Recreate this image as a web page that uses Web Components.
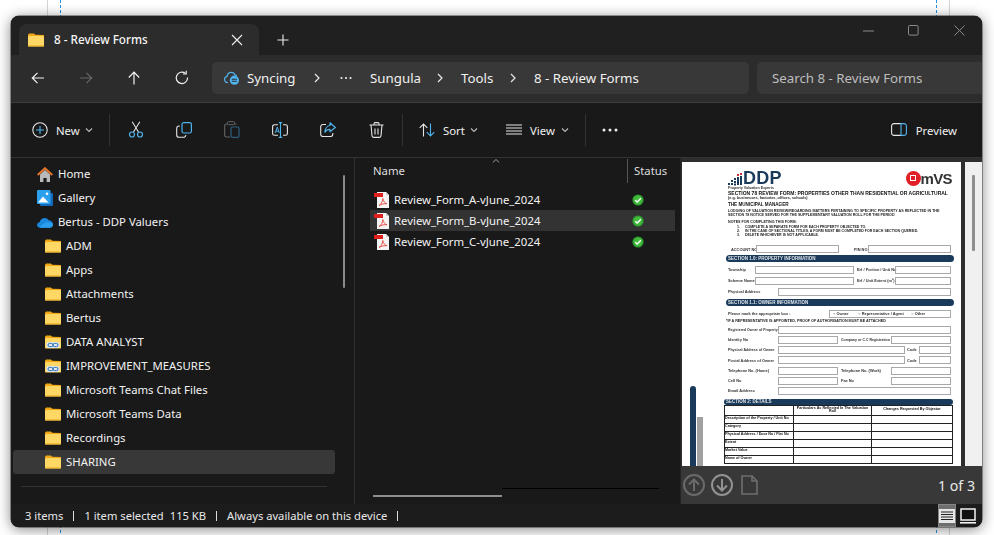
<!DOCTYPE html>
<html lang="en"><head><meta charset="utf-8"><title>8 - Review Forms</title>
<style>html,body{margin:0;padding:0;background:#fff;font-family:"Noto Sans","Open Sans",sans-serif;font-size:11.35px;color:#f0f0f0;overflow:hidden}</style>
</head><body>
<ex-desktop>
<ex-window>
  <ex-titlebar slot="title"></ex-titlebar>
  <ex-navbar slot="nav"></ex-navbar>
  <ex-toolbar slot="tools"></ex-toolbar>
  <ex-sidebar slot="side">
    <nav-item icon="home" level="0">Home</nav-item>
    <nav-item icon="gallery" level="0">Gallery</nav-item>
    <nav-item icon="onedrive" level="0">Bertus - DDP Valuers</nav-item>
    <nav-item icon="folder">ADM</nav-item>
    <nav-item icon="folder">Apps</nav-item>
    <nav-item icon="folder">Attachments</nav-item>
    <nav-item icon="folder">Bertus</nav-item>
    <nav-item icon="folderlink">DATA ANALYST</nav-item>
    <nav-item icon="folderlink">IMPROVEMENT_MEASURES</nav-item>
    <nav-item icon="folder">Microsoft Teams Chat Files</nav-item>
    <nav-item icon="folder">Microsoft Teams Data</nav-item>
    <nav-item icon="folder">Recordings</nav-item>
    <nav-item icon="folder" selected>SHARING</nav-item>
  </ex-sidebar>
  <file-list slot="files">
    <file-row>Review_Form_A-vJune_2024</file-row>
    <file-row selected>Review_Form_B-vJune_2024</file-row>
    <file-row>Review_Form_C-vJune_2024</file-row>
  </file-list>
  <preview-pane slot="preview"><doc-page></doc-page></preview-pane>
  <status-bar slot="status"></status-bar>
</ex-window>
</ex-desktop>
<script>
const W='#f2f2f2',B='#4fb3ec';
const FOLDER=`<path d="M0 2.2C0 1 .8.4 1.8.4h3.6c.8 0 1.2.7 1.9 1.3L16 2v2H0z" fill="#f0a818"/><rect x="0" y="3" width="16" height="10.6" rx="1.2" fill="#ffd765"/><rect x="0" y="12.6" width="16" height="1" rx=".5" fill="#e8a820"/>`;
const ICONS={
 folder:[16,14,FOLDER],
 folderlink:[16,14,`<path d="M0 2.2C0 1 .8.4 1.8.4h3.6c.8 0 1.2.7 1.9 1.3L16 2v2H0z" fill="#f0a818"/><rect x="0" y="3" width="16" height="10.6" rx="1.2" fill="#ffd765"/><rect x="1.2" y="7" width="13.6" height="6" rx="3" fill="#dbe7f2"/><rect x="3" y="8.4" width="5" height="3.2" rx="1.6" fill="none" stroke="#2a6fb0" stroke-width="1"/><rect x="8" y="8.4" width="5" height="3.2" rx="1.6" fill="none" stroke="#2a6fb0" stroke-width="1"/>`],
 home:[16,15,`<path d="M3 7.5 8 3l5 4.5V15H9.6v-4H6.4v4H3z" fill="#b9b9b9"/><path d="M.7 8 8 1.2 15.3 8" fill="none" stroke="#e8772a" stroke-width="1.9"/>`],
 gallery:[16,16,`<rect x="3" y="3" width="13" height="13" rx="1" fill="#1668b8"/><rect x="0" y="0" width="13.5" height="14" rx="1" fill="#2aa0ee"/><path d="M1 12.5 6 6.5l5.5 6z" fill="#fff"/><circle cx="10" cy="3.8" r="1.3" fill="#fff"/>`],
 onedrive:[16,11,`<path d="M3.2 10.8C1.4 10.8 0 9.6 0 8c0-1.5 1.2-2.6 2.6-2.8C3.2 2.8 5.2 1 7.6 1c1.7 0 3.2.9 4 2.3 2.2 0 4.4 1.6 4.4 4.3 0 1.8-1.4 3.2-3.2 3.2z" fill="#1a86dc"/><path d="M2.6 10.8h10.2c1.8 0 3.2-1.4 3.2-3.2 0-.5-.1-1-.3-1.4L10 5 4.5 8z" fill="#2a9ff0"/>`],
 back:[16,16,`<path d="M14 8H2.5M7.5 2.8 2.3 8l5.2 5.2" fill="none" stroke="${W}" stroke-width="1.2"/>`],
 forward:[16,16,`<path d="M2 8h11.5M8.5 2.8 13.7 8l-5.2 5.2" fill="none" stroke="#666" stroke-width="1.2"/>`],
 up:[16,16,`<path d="M8 14.5V2.5M2.8 7.5 8 2.2l5.2 5.3" fill="none" stroke="${W}" stroke-width="1.2"/>`],
 refresh:[16,16,`<path d="M13.6 7.6a5.7 5.7 0 1 1-2.1-4.2" fill="none" stroke="${W}" stroke-width="1.2"/><path d="M12.2.8v3.2H9" fill="none" stroke="${W}" stroke-width="1.2"/>`],
 chev:[8,10,`<path d="M2 1l4 4-4 4" fill="none" stroke="#e8e8e8" stroke-width="1.2"/>`],
 dots3:[12,4,`<circle cx="1.5" cy="2" r="1.1" fill="#eee"/><circle cx="6" cy="2" r="1.1" fill="#eee"/><circle cx="10.5" cy="2" r="1.1" fill="#eee"/>`],
 sync:[15,14,`<path d="M4 11.5C2 11.5.6 10.2.6 8.4c0-1.5 1-2.7 2.4-3C3.4 3 5 1.3 7.2 1.3c1.8 0 3.3 1 3.9 2.7.7 0 1.3.2 1.8.5" fill="none" stroke="${B}" stroke-width="1.2"/><circle cx="10.4" cy="9.2" r="4.6" fill="${B}"/><path d="M7.8 8.3h5M7.8 10.2h5" stroke="#2c2c2c" stroke-width="1.1"/>`],
 close:[12,12,`<path d="M1 1l10 10M11 1 1 11" stroke="#eee" stroke-width="1.1"/>`],
 plus:[12,12,`<path d="M6 .5v11M.5 6h11" stroke="#eee" stroke-width="1.1"/>`],
 wmin:[11,2,`<path d="M0 1h11" stroke="#8a8a8a" stroke-width="1"/>`],
 wmax:[11,11,`<rect x=".5" y=".5" width="9.6" height="9.6" rx="1.2" fill="none" stroke="#8a8a8a"/>`],
 wclose:[11,11,`<path d="M.5.5l10 10M10.5.5l-10 10" stroke="#8a8a8a" stroke-width="1"/>`],
 new:[16,16,`<circle cx="8" cy="8" r="7.2" fill="none" stroke="#e6e6e6" stroke-width="1.1"/><path d="M8 4v8M4 8h8" stroke="${B}" stroke-width="1.1"/>`],
 down:[8,6,`<path d="M1 1.5l3 3 3-3" fill="none" stroke="#bbb" stroke-width="1.1"/>`],
 cut:[16,17,`<path d="M5.5 11 11.8.8M10.5 11 4.2.8" stroke="#e6e6e6" stroke-width="1.1" fill="none"/><circle cx="4" cy="13.5" r="2.5" fill="none" stroke="${B}" stroke-width="1.2"/><circle cx="12" cy="13.5" r="2.5" fill="none" stroke="${B}" stroke-width="1.2"/>`],
 copy:[16,16,`<rect x="6" y=".6" width="9.4" height="10.4" rx="1.8" fill="none" stroke="${B}" stroke-width="1.2"/><path d="M3.8 4H3a2.3 2.3 0 0 0-2.3 2.3V13A2.3 2.3 0 0 0 3 15.3h4.5A2.3 2.3 0 0 0 9.8 13" fill="none" stroke="#e6e6e6" stroke-width="1.1"/>`],
 paste:[16,17,`<path d="M3.5 3H2.5A1.8 1.8 0 0 0 .7 4.8v9.4A1.8 1.8 0 0 0 2.5 16H6" fill="none" stroke="#666" stroke-width="1.1"/><path d="M11 3h1.5" stroke="#666" stroke-width="1.1"/><rect x="3.5" y=".7" width="7" height="3" rx=".8" fill="none" stroke="#666" stroke-width="1"/><rect x="7" y="6" width="8" height="10.4" rx="1.5" fill="none" stroke="#2e5f80" stroke-width="1.2"/>`],
 rename:[16,16,`<path d="M6 2.7H2.5A1.9 1.9 0 0 0 .6 4.6v6.8a1.9 1.9 0 0 0 1.9 1.9H6M11 2.7h2.5a1.9 1.9 0 0 1 1.9 1.9v6.8a1.9 1.9 0 0 1-1.9 1.9H11" fill="none" stroke="#e6e6e6" stroke-width="1.1"/><path d="M8.5.6v14.8M6.800.6h3.400M6.800 15.400h3.400" stroke="${B}" stroke-width="1.1"/><path d="M3.200 11 5.300 5l2 6M3.900 9.200h2.900" stroke="${B}" stroke-width="1" fill="none"/>`],
 share:[16,15,`<path d="M6 2.5H3A2.3 2.3 0 0 0 .7 4.8v7.4A2.3 2.3 0 0 0 3 14.500h7.500a2.300 2.300 0 0 0 2.300-2.300V11" fill="none" stroke="#e6e6e6" stroke-width="1.1"/><path d="M10 .8 15.300 5.500 10 9.800V7.400c-2.400 0-4 .9-5 2.800C5 7 6.800 3.900 10 3.500z" fill="none" stroke="${B}" stroke-width="1.2" stroke-linejoin="round"/>`],
 trash:[15,16,`<path d="M.5 3h14M5 3V1.800A1.200 1.200 0 0 1 6.200.6h2.600A1.200 1.200 0 0 1 10 1.800V3M2 3l1 10.800a1.700 1.700 0 0 0 1.700 1.600h5.600a1.700 1.700 0 0 0 1.700-1.600L13 3M6 6.500v6M9 6.500v6" fill="none" stroke="#e6e6e6" stroke-width="1.1"/>`],
 sort:[16,14,`<path d="M4.500 13.500V1M.7 4.800 4.500 1l3.800 3.800" fill="none" stroke="#e6e6e6" stroke-width="1.1"/><path d="M11.500.5V13M7.700 9.200l3.800 3.800 3.800-3.800" fill="none" stroke="${B}" stroke-width="1.1"/>`],
 view:[16,11,`<path d="M0 1h16M0 4h16M0 7h16M0 10h16" stroke="#e6e6e6" stroke-width="1"/>`],
 more:[16,4,`<circle cx="2" cy="2" r="1.5" fill="#eee"/><circle cx="8" cy="2" r="1.5" fill="#eee"/><circle cx="14" cy="2" r="1.5" fill="#eee"/>`],
 preview:[16,13,`<path d="M10 .6H3A2.400 2.400 0 0 0 .6 3v7A2.400 2.400 0 0 0 3 12.400h7" fill="none" stroke="#e6e6e6" stroke-width="1.1"/><path d="M10 .6h3a2.400 2.400 0 0 1 2.400 2.400v7a2.400 2.400 0 0 1-2.400 2.400h-3zM10 .6v11.800" fill="none" stroke="${B}" stroke-width="1.1"/>`],
 pdf:[16,18,`<path d="M3 1h9l3 3v13H3z" fill="#f4f4f4"/><path d="M12 1v3h3" fill="#ccc"/><rect x="0" y="2" width="9" height="4" fill="#e0201c"/><path d="M5 14.500c2-1 3.500-3.500 3.800-7 .6 3 2 4.600 4.200 5.200-3-.2-5.500.3-8 1.800z" fill="none" stroke="#e8443c" stroke-width=".9"/>`],
 ok:[12,12,`<circle cx="6" cy="6" r="5.6" fill="#2f9e2f"/><circle cx="6" cy="6" r="4.2" fill="#44bb3c"/><path d="M3.200 6.200 5.200 8l3.700-3.700" fill="none" stroke="#fff" stroke-width="1.3"/>`],
 cup:[8,6,`<path d="M.8 4.500 4 1.500l3.200 3" fill="none" stroke="#999" stroke-width="1"/>`],
 pgup:[22,22,`<circle cx="11" cy="11" r="10" fill="none" stroke="#6a6a6a" stroke-width="2"/><path d="M11 17V6M6 10.500l5-5 5 5" fill="none" stroke="#6a6a6a" stroke-width="2"/>`],
 pgdn:[22,22,`<circle cx="11" cy="11" r="10" fill="none" stroke="#929292" stroke-width="2"/><path d="M11 5v11M6 11.500l5 5 5-5" fill="none" stroke="#929292" stroke-width="2"/>`],
 pgdoc:[17,20,`<path d="M1 1h10l5 5v13H1zM11 1v5h5" fill="none" stroke="#6e6e6e" stroke-width="1.6"/>`],
 vdetails:[16,14,`<rect x=".5" y=".5" width="15" height="13" fill="#e6e6e6" stroke="#e6e6e6"/><path d="M2 3h12M2 5.500h12M2 8h12M2 10.500h12" stroke="#222" stroke-width="1"/>`],
 vlarge:[16,16,`<rect x="1" y="1" width="14" height="11" fill="#111" stroke="#f2f2f2" stroke-width="1.5"/><path d="M0 14.800h16" stroke="#f2f2f2" stroke-width="1.6"/>`],
};
function def(name,css,html,init){
  customElements.define(name,class extends HTMLElement{
    constructor(){super();const r=this.attachShadow({mode:'open'});r.innerHTML=`<style>${css}</style>${typeof html==='function'?html(this):html}`;}
    connectedCallback(){if(init)init(this);}
  });
}
customElements.define('ex-icon',class extends HTMLElement{
  connectedCallback(){
    if(this.shadowRoot)return;
    const i=ICONS[this.getAttribute('name')];
    const r=this.attachShadow({mode:'open'});
    r.innerHTML=`<style>:host{display:inline-flex;flex:none;line-height:0}svg{display:block}</style><svg width="${i[0]}" height="${i[1]}" viewBox="0 0 ${i[0]} ${i[1]}">${i[2]}</svg>`;
  }
});
def('ex-desktop',`:host{display:block;box-sizing:border-box;width:994px;height:535px;padding:16px 12px 8px 11px;overflow:hidden;
 background:
  linear-gradient(#d5d5d5,#d5d5d5) 47px 0/1px 100% no-repeat,
  linear-gradient(#d5d5d5,#d5d5d5) 949px 0/1px 100% no-repeat,
  repeating-linear-gradient(#1e90e6 0 3px,transparent 3px 5px) 60px 0/1px 100% no-repeat,
  repeating-linear-gradient(#1e90e6 0 3px,transparent 3px 5px) 936px 0/1px 100% no-repeat,#fff}`,`<slot></slot>`);
def('ex-window',`:host{display:flex;flex-direction:column;width:971px;height:511px;border-radius:8px;overflow:hidden;background:#1a1a1a;box-shadow:0 2px 14px rgba(0,0,0,.5),0 0 0 .5px #555}
 .main{display:flex;flex:1;min-height:0;background:#191919}
 .divider{flex:none;width:1px;background:#2e2e2e;margin-left:0}`,
 `<slot name="title"></slot><slot name="nav"></slot><slot name="tools"></slot>
  <div class="main"><slot name="side"></slot><div class="divider"></div><slot name="files"></slot><slot name="preview"></slot></div>
  <slot name="status"></slot>`);
def('ex-titlebar',`:host{display:flex;align-items:flex-end;height:39px;box-sizing:border-box;padding:8px 0 0 8px;background:#202020;flex:none}
 .tab{display:flex;align-items:center;width:240px;height:31px;box-sizing:border-box;padding:0 16px 0 9px;background:#2c2c2c;border-radius:8px 8px 0 0;font-size:11.7px;color:#f5f5f5}
 .tab span{margin:-2px 0 0 10px;flex:1;white-space:nowrap;font-weight:500}
 .plus{margin:0 0 0 18px;align-self:center;display:flex}
 .ctl{margin-left:auto;align-self:flex-start;display:flex;margin-top:1px;height:11px;align-items:center}
 .ctl ex-icon:nth-child(1){margin-right:34px}.ctl ex-icon:nth-child(2){margin-right:35px}.ctl ex-icon:nth-child(3){margin-right:17px}`,
 `<div class="tab"><ex-icon name="folder"></ex-icon><span>8 - Review Forms</span><ex-icon name="close"></ex-icon></div>
  <div class="plus"><ex-icon name="plus"></ex-icon></div>
  <div class="ctl"><ex-icon name="wmin"></ex-icon><ex-icon name="wmax"></ex-icon><ex-icon name="wclose"></ex-icon></div>`);
def('ex-navbar',`:host{display:flex;align-items:center;height:48px;box-sizing:border-box;flex:none;padding:0 0 1px 3px;background:#2c2c2c;border-bottom:1px solid #3c3c3c;font-size:13.3px}
 .b{width:48px;display:flex;justify-content:center;flex:none}
 .addr{margin-left:6px;width:537px;height:32px;box-sizing:border-box;background:#383838;border-radius:5px;display:flex;align-items:center;padding-left:12px;flex:none;white-space:nowrap;color:#f0f0f0}
 .addr>*{flex:none}
 .s{margin-left:8px;flex:1;height:32px;box-sizing:border-box;background:#383838;border-radius:5px 0 0 5px;display:flex;align-items:center;padding-left:15px;color:#bdbdbd;white-space:nowrap}`,
 `<div class="b"><ex-icon name="back"></ex-icon></div><div class="b"><ex-icon name="forward"></ex-icon></div><div class="b"><ex-icon name="up"></ex-icon></div><div class="b"><ex-icon name="refresh"></ex-icon></div>
  <div class="addr"><ex-icon name="sync" style="margin-right:8px"></ex-icon><span style="width:48px">Syncing</span><ex-icon name="chev" style="margin-left:18px"></ex-icon><ex-icon name="dots3" style="margin-left:19px"></ex-icon><span style="margin-left:18px;width:50px">Sungula</span><ex-icon name="chev" style="margin-left:16px"></ex-icon><span style="margin-left:17px;width:32px">Tools</span><ex-icon name="chev" style="margin-left:16px"></ex-icon><span style="margin-left:17px">8 - Review Forms</span></div>
  <div class="s">Search 8 - Review Forms</div>`);
def('ex-toolbar',`:host{display:flex;align-items:center;height:55px;box-sizing:border-box;flex:none;background:#191919;border-bottom:1px solid #333;padding:0 0 1px 21px;color:#f0f0f0}
 .sep{width:1px;height:32px;background:#333;flex:none}
 .i{width:48px;display:flex;justify-content:center;flex:none}
 .t{display:flex;align-items:center;flex:none}
 .t span{margin:2px 5px 0 8px}`,
 `<div class="t" style="width:77px"><ex-icon name="new"></ex-icon><span>New</span><ex-icon name="down"></ex-icon></div><div class="sep"></div>
  <div style="width:2px"></div>
  <div class="i"><ex-icon name="cut"></ex-icon></div><div class="i"><ex-icon name="copy"></ex-icon></div><div class="i"><ex-icon name="paste"></ex-icon></div><div class="i"><ex-icon name="rename"></ex-icon></div><div class="i"><ex-icon name="share"></ex-icon></div><div class="i"><ex-icon name="trash"></ex-icon></div>
  <div style="width:2px"></div><div class="sep"></div>
  <div class="t" style="margin-left:16px;width:87px"><ex-icon name="sort"></ex-icon><span>Sort</span><ex-icon name="down"></ex-icon></div>
  <div class="t" style="width:79px"><ex-icon name="view"></ex-icon><span style="margin-right:6px">View</span><ex-icon name="down"></ex-icon></div>
  <div class="sep"></div>
  <ex-icon name="more" style="margin-left:16px"></ex-icon>
  <div class="t" style="margin-left:auto;margin-right:25px"><ex-icon name="preview"></ex-icon><span style="margin:2px 0 0 9px">Preview</span></div>`);
def('ex-sidebar',`:host{display:block;position:relative;flex:none;width:343px;box-sizing:border-box;padding:4px 0 0 2px}
 .hr{height:1px;background:#333;margin:12px 7px 0 8px;width:306px}
 .thumb{position:absolute;left:332px;top:17px;width:2px;height:113px;background:#8a8a8a;border-radius:1px}`,
 `<slot></slot><div class="hr"></div><div class="thumb"></div>`);
def('nav-item',`:host{display:flex;align-items:center;width:322px;height:24px;box-sizing:border-box;padding-left:32px;white-space:nowrap;color:#f2f2f2;border-radius:3px}
 :host([level="0"]){padding-left:24px}
 :host([selected]){background:#383838}
 .ic{width:16px;display:flex;justify-content:center;margin-right:5px;flex:none}
 .tx{margin-top:-2px}`,
 t=>`<div class="ic"><ex-icon name="${t.getAttribute('icon')}"></ex-icon></div><div class="tx"><slot></slot></div>`);
def('file-list',`:host{display:block;position:relative;flex:none;width:325px;box-sizing:border-box;padding:0 0 0 15px}
 .hd{display:flex;height:25px;align-items:center;box-sizing:border-box;padding:0 0 0 3px;position:relative;color:#ddd}
 .nm{width:254px}.d{width:1px;height:24px;background:#555;margin-right:6px;flex:none}
 .cup{position:absolute;left:122px;top:0;line-height:0}
 .rows{margin-top:6px}
 .sb{position:absolute;left:18px;top:337px;width:129px;height:2px;background:#8e8e8e}
 .bl{position:absolute;left:147px;top:330px;width:157px;height:1px;background:#000}`,
 `<div class="hd"><div class="nm">Name</div><div class="d"></div><div>Status</div><div class="cup"><ex-icon name="cup"></ex-icon></div></div>
  <div class="rows"><slot></slot></div><div class="sb"></div><div class="bl"></div>`);
def('file-row',`:host{display:flex;align-items:center;width:305px;height:21px;box-sizing:border-box;padding-left:4px;white-space:nowrap;color:#f2f2f2}
 :host([selected]){background:#333}
 .n{width:238px;margin-left:4px;flex:none}`,
 `<ex-icon name="pdf"></ex-icon><div class="n"><slot></slot></div><ex-icon name="ok"></ex-icon>`);
def('preview-pane',`:host{display:flex;flex-direction:column;flex:1;min-width:0;background:#2e2e2e;border-left:1px solid #242424}
 .top{flex:1;min-height:0;display:flex;padding:4px 0 0 1px;overflow:hidden}
 .bar{flex:none;height:38px;display:flex;align-items:center;background:#383838;padding:0 7px 0 2px;color:#e8e8e8;font-size:14.2px}
 .rail{margin-left:4px;width:17px;background:#f0f0f0;flex:none;position:relative}
 .rail i{position:absolute;left:7px;top:13px;width:3px;height:76px;background:#8f8f8f;border-radius:1px}`,
 `<div class="top"><slot></slot><div class="rail"><i></i></div></div>
  <div class="bar"><ex-icon name="pgup"></ex-icon><ex-icon name="pgdn" style="margin-left:6px"></ex-icon><ex-icon name="pgdoc" style="margin-left:8px"></ex-icon><span style="margin-left:auto">1 of 3</span></div>`);
const box=w=>`<div class="bx" style="width:${w}px"></div>`;
def('doc-page',`:host{display:block;flex:none;width:279px;background:#fff;overflow:hidden;position:relative;box-sizing:border-box;color:#222;font-family:"Liberation Sans",sans-serif;font-size:4px}
 .c{position:absolute;left:44px;top:8px;width:228px;filter:blur(.4px)}
 .hdr{height:21px;display:flex;justify-content:space-between;padding:0 2px 0 2px}
 .ddp{position:relative;width:60px}
 .ddp b{font-size:18px;line-height:16px;color:#1a3a5c;margin-left:15px;display:block;letter-spacing:.2px}
 .ddp small{font-size:3.6px;font-weight:bold;display:block;line-height:4px;color:#333;white-space:nowrap}
 .ddp svg{position:absolute;left:0;top:3px}
 .mvs{display:flex;align-items:center;height:17px;position:relative}
 .mvs i{display:block;width:15px;height:15px;border-radius:50%;background:#e01f26;margin-right:-1px;position:relative}
 .mvs i::after{content:"";position:absolute;left:4px;top:4px;width:6px;height:6px;border:1px solid #fff;box-sizing:border-box}
 .mvs b{font-size:15px;line-height:14px;color:#333;letter-spacing:-.6px}
 .t{font-size:5px;line-height:5px;font-weight:bold;color:#111;padding-left:2px;white-space:nowrap}
 .s{font-size:3.8px;line-height:4px;font-weight:bold;padding-left:2px;white-space:nowrap}
 .p{font-size:3.65px;line-height:4px;padding-left:2px;white-space:nowrap;font-weight:bold;color:#222}
 .li{padding-left:11px;font-size:3.55px;line-height:4px;white-space:nowrap;font-weight:bold;color:#222}
 .li u{display:inline-block;width:8px;text-decoration:none}
 .bar{height:7px;border-radius:4px;background:#1a3a5c;color:#e0e4e8;font-weight:bold;font-size:4.5px;line-height:7px;padding-left:2px;white-space:nowrap}
 .r{display:flex;align-items:center;height:9px;white-space:nowrap;font-size:3.9px;font-weight:bold;color:#333}
 .r>span{flex:none}
 .bx{height:8px;border:.75px solid #a8a8a8;box-sizing:border-box;flex:none}
 table{border-collapse:collapse;width:229px;table-layout:fixed;margin-left:-2px;font-size:3.7px;font-weight:bold;margin-top:.5px;color:#111}
 td{border:.75px solid #222;height:8px;padding:0;line-height:3.7px;white-space:nowrap;overflow:hidden;box-sizing:border-box}
 .h td{height:9.5px;text-align:center;white-space:normal}
 .n1{position:absolute;left:8px;top:224px;width:6px;height:90px;background:#1a3a5c;border-radius:3px 3px 0 0}
 .n2{position:absolute;left:15px;top:255px;width:6px;height:60px;background:#a0a0a0}`,
 `<div class="n1"></div><div class="n2"></div><div class="c">
 <div class="hdr"><div class="ddp"><svg width="15" height="13" viewBox="0 0 15 13"><g fill="#1a3a5c"><rect x="0" y="10" width="2" height="2"/><rect x="3" y="7" width="2" height="2"/><rect x="3" y="10" width="2" height="2"/><rect x="6" y="5" width="2" height="2"/><rect x="6" y="8" width="2" height="2"/><rect x="6" y="10.5" width="2" height="2"/></g><g fill="#d23030"><rect x="9" y="1" width="2" height="2"/><rect x="12" y="0" width="2" height="2"/></g><g fill="#1a3a5c"><rect x="9" y="4" width="2" height="8"/><rect x="12" y="3" width="2" height="9"/></g></svg><b>DDP</b><small>Property Valuation Experts</small></div>
 <div class="mvs"><i></i><b>mVS</b></div></div>
 <div class="t">SECTION 78 REVIEW FORM: PROPERTIES OTHER THAN RESIDENTIAL OR AGRICULTURAL</div>
 <div class="s">(e.g. businesses, factories, offices, schools)</div>
 <div class="t" style="margin-top:2px;font-size:4.6px">THE MUNICIPAL MANAGER</div>
 <div class="p" style="margin-top:2px">LODGING OF VALUATION REVIEW/REGARDING MATTERS PERTAINING TO SPECIFIC PROPERTY AS REFLECTED IN THE</div>
 <div class="p">SECTION 78 NOTICE SERVED FOR THE SUPPLEMENTARY VALUATION ROLL FOR THE PERIOD</div>
 <div class="p" style="margin-top:3px">NOTES FOR COMPLETING THIS FORM:</div>
 <div class="li" style="margin-top:1px"><u>1.</u>COMPLETE A SEPARATE FORM FOR EACH PROPERTY OBJECTED TO.</div>
 <div class="li"><u>2.</u>IN THE CASE OF SECTIONAL TITLES, A FORM MUST BE COMPLETED FOR EACH SECTION QUERIED.</div>
 <div class="li"><u>3.</u>DELETE WHICHEVER IS NOT APPLICABLE.</div>
 <div class="r" style="margin-top:7.5px;padding-left:5px"><span style="width:25px">ACCOUNT NO</span>${box(83)}<span style="margin-left:15px;width:14px">PIN NO</span>${box(83)}</div>
 <div class="bar" style="margin-top:1.5px">SECTION 1.0: PROPERTY INFORMATION</div>
 <div class="r" style="margin-top:3px;padding-left:2px"><span style="width:27px">Township</span>${box(99)}<span style="margin-left:3px;width:38px">Erf / Portion / Unit No</span>${box(56)}</div>
 <div class="r" style="margin-top:2px;padding-left:2px"><span style="width:27px">Scheme Name</span>${box(99)}<span style="margin-left:3px;width:38px">Erf / Unit Extent (m²)</span>${box(56)}</div>
 <div class="r" style="margin-top:2px;padding-left:2px"><span style="width:50px">Physical Address</span>${box(173)}</div>
 <div class="bar" style="margin-top:3px">SECTION 1.1: OWNER INFORMATION</div>
 <div class="r" style="margin-top:3px;padding-left:2px"><span style="width:101px">Please mark the appropriate box :</span><div class="bx" style="width:122px;padding-left:3px;line-height:6.5px">○ Owner &nbsp; &nbsp; &nbsp; &nbsp; ○ Representative / Agent &nbsp; &nbsp; &nbsp; ○ Other</div></div>
 <div class="p" style="line-height:5px;margin-top:1px;font-size:3.7px;padding-left:0">*IF A REPRESENTATIVE IS APPOINTED, PROOF OF AUTHORISATION MUST BE ATTACHED</div>
 <div class="r" style="margin-top:1px;padding-left:2px"><span style="width:50px;font-size:3.5px">Registered Owner of Property</span>${box(173)}</div>
 <div class="r" style="margin-top:1px;padding-left:2px"><span style="width:50px">Identity No</span>${box(60)}<span style="margin-left:3px;width:50px;font-size:3.5px">Company or C.C Registration</span>${box(60)}</div>
 <div class="r" style="margin-top:1px;padding-left:2px"><span style="width:50px;font-size:3.6px">Physical Address of Owner</span>${box(127)}<span style="margin-left:2px;width:12px">Code</span>${box(32)}</div>
 <div class="r" style="margin-top:1.5px;padding-left:2px"><span style="width:50px">Postal Address of Owner</span>${box(127)}<span style="margin-left:2px;width:12px">Code</span>${box(32)}</div>
 <div class="r" style="margin-top:1.5px;padding-left:2px"><span style="width:50px">Telephone No. (Home)</span>${box(60)}<span style="margin-left:3px;width:50px">Telephone No. (Work)</span>${box(60)}</div>
 <div class="r" style="margin-top:1px;padding-left:2px"><span style="width:50px">Cell No</span>${box(60)}<span style="margin-left:3px;width:50px">Fax No</span>${box(60)}</div>
 <div class="r" style="margin-top:1px;padding-left:2px"><span style="width:50px">Email Address</span>${box(173)}</div>
 <div class="bar" style="margin-top:3.5px;height:6px;line-height:6px;margin-left:-2px;width:227px">SECTION 2: DETAILS</div>
 <table><colgroup><col style="width:69px"><col style="width:78px"><col></colgroup>
 <tr class="h"><td></td><td>Particulars As Reflected In The Valuation Roll</td><td>Changes Requested By Objector</td></tr>
 <tr><td>Description of the Property / Unit No</td><td></td><td></td></tr>
 <tr><td>Category</td><td></td><td></td></tr>
 <tr><td>Physical Address / Door No / Flat No</td><td></td><td></td></tr>
 <tr><td>Extent</td><td></td><td></td></tr>
 <tr><td>Market Value</td><td></td><td></td></tr>
 <tr><td>Name of Owner</td><td></td><td></td></tr>
 </table></div>`);
def('status-bar',`:host{display:flex;align-items:center;flex:none;height:23px;background:#1c1c1c;color:#e8e8e8;padding-left:14px;white-space:nowrap;font-size:11.2px}
 .d{width:1px;height:10px;background:#ddd;flex:none;margin:0 10px}
 .v{margin-left:auto;display:flex;align-items:stretch;height:23px;margin-right:6px}
 .vb{width:18px;display:flex;align-items:center;justify-content:center;box-sizing:border-box}
 .vb.l{width:16px}
 .on{background:#6e6e6e;border:1px solid #858585;margin-right:4px}`,
 `<span>3 items</span><div class="d"></div><span>1 item selected</span><span style="margin-left:6px">115 KB</span><div class="d"></div><span>Always available on this device</span><div class="d"></div>
  <div class="v"><div class="vb on"><ex-icon name="vdetails"></ex-icon></div><div class="vb l"><ex-icon name="vlarge"></ex-icon></div></div>`);
</script>
</body></html>
